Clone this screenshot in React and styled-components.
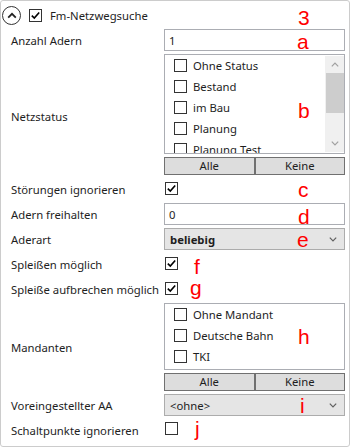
import React from 'react';
import styled, { createGlobalStyle } from 'styled-components';

const Global = createGlobalStyle`
  html, body { margin: 0; padding: 0; background: #ffffff; }
  body {
    font-family: "Noto Sans", "Open Sans", sans-serif;
    font-size: 11.3px;
    color: #1e1e1e;
  }
  * { box-sizing: border-box; }
`;

const Group = styled.section`
  position: relative;
  width: 350px;
  height: 447px;
  border: 1px solid #cccccc;
  border-radius: 3px;
`;

const Header = styled.header`
  display: flex;
  align-items: center;
  height: 28px;
  padding-left: 1px;
`;

const Expander = styled.span`
  width: 19px;
  height: 19px;
  border-radius: 50%;
  border: 1px solid #333333;
  display: flex;
  align-items: center;
  justify-content: center;
  margin-right: 8px;
  flex: none;
`;

const Box = styled.span`
  display: inline-flex;
  align-items: center;
  justify-content: center;
  width: 13px;
  height: 13px;
  border: 1px solid #333333;
  background: #ffffff;
  flex: none;
  margin-left: ${(p) => p.$ml || 0}px;
`;

const Title = styled.span`
  margin-left: 8px;
  white-space: nowrap;
`;

const Form = styled.div`
  display: flex;
  flex-direction: column;
  gap: 3px;
  padding: 0 4px 0 10px;
`;

const Field = styled.div`
  display: grid;
  grid-template-columns: 153px 181px;
  align-items: center;
  min-height: ${(p) => p.$h || 0}px;
`;

const Label = styled.span`
  white-space: nowrap;
  padding-top: ${(p) => p.$pt || 0}px;
`;

const Stack = styled.div`
  display: flex;
  flex-direction: column;
  gap: 3px;
`;

const TextInput = styled.div`
  height: 22px;
  border: 1px solid #abadb3;
  background: #ffffff;
  display: flex;
  align-items: center;
  padding: 0 4px;
`;

const List = styled.div`
  height: ${(p) => p.$h}px;
  border: 1px solid #abadb3;
  background: #ffffff;
  display: flex;
  overflow: hidden;
`;

const Items = styled.div`
  flex: 1;
  display: flex;
  flex-direction: column;
  overflow: hidden;
`;

const Item = styled.div`
  flex: none;
  height: 21px;
  display: flex;
  align-items: center;
  gap: 6px;
  padding-left: 9px;
  white-space: nowrap;
`;

const Scrollbar = styled.div`
  width: 19px;
  margin: 1px 0;
  background: #f0f0f0;
  display: flex;
  flex-direction: column;
  flex: none;
`;

const ScrollArrow = styled.div`
  height: 17px;
  display: flex;
  align-items: center;
  justify-content: center;
  flex: none;
`;

const Track = styled.div`
  flex: 1;
`;

const Thumb = styled.div`
  height: 40px;
  margin-left: 1px;
  background: #cdcdcd;
`;

const ButtonRow = styled.div`
  display: flex;
`;

const Button = styled.button`
  flex: 1;
  height: 18px;
  padding: 0;
  border: 1px solid #707070;
  background: #dddddd;
  font: inherit;
  color: #1e1e1e;
  line-height: 14px;
`;

const Combo = styled.div`
  height: 22px;
  border: 1px solid #acacac;
  background: #e5e5e5;
  display: flex;
  align-items: center;
  justify-content: space-between;
  padding: 0 7px 0 5px;
  font-weight: ${(p) => (p.$bold ? 700 : 400)};
`;

const Mark = styled.span`
  position: absolute;
  left: ${(p) => p.$x}px;
  top: ${(p) => p.$y}px;
  font-family: "Liberation Sans", Arial, sans-serif;
  font-size: 21px;
  line-height: 21px;
  color: #ff0000;
  pointer-events: none;
`;

const Check = () => (
  <svg width="11" height="11" viewBox="0 0 11 11">
    <path d="M1.8 5.6 L4.3 8.1 L9.2 2.4" fill="none" stroke="#000" strokeWidth="1.6" />
  </svg>
);

const CheckBox = ({ checked, ml }) => <Box $ml={ml}>{checked && <Check />}</Box>;

const Chevron = ({ up, color = '#606060', w = 8, h = 5 }) => (
  <svg width={w} height={h} viewBox="0 0 8 5">
    <path
      d={up ? 'M0.8 4.3 L4 1 L7.2 4.3' : 'M0.8 0.7 L4 4 L7.2 0.7'}
      fill="none"
      stroke={color}
      strokeWidth="1.2"
    />
  </svg>
);

const CheckList = ({ items, height, scroll }) => (
  <List $h={height}>
    <Items>
      {items.map((t) => (
        <Item key={t}>
          <CheckBox />
          <span>{t}</span>
        </Item>
      ))}
    </Items>
    {scroll && (
      <Scrollbar>
        <ScrollArrow>
          <Chevron up color="#a0a0a0" />
        </ScrollArrow>
        <Track>
          <Thumb />
        </Track>
        <ScrollArrow>
          <Chevron color="#a0a0a0" />
        </ScrollArrow>
      </Scrollbar>
    )}
  </List>
);

const Buttons = () => (
  <ButtonRow>
    <Button>Alle</Button>
    <Button>Keine</Button>
  </ButtonRow>
);

const marks = [
  ['3', 297, 6],
  ['a', 296, 30],
  ['b', 297, 99],
  ['c', 297, 178],
  ['d', 297, 205],
  ['e', 296, 228],
  ['f', 193, 255],
  ['g', 189, 276],
  ['h', 297, 325],
  ['i', 299, 394],
  ['j', 194, 417],
];

export default function App() {
  return (
    <>
      <Global />
      <Group>
        <Header>
          <Expander>
            <svg width="10" height="7" viewBox="0 0 10 7">
              <path d="M1.2 5.6 L5 1.8 L8.8 5.6" fill="none" stroke="#222" strokeWidth="1.8" />
            </svg>
          </Expander>
          <CheckBox checked />
          <Title>Fm-Netzwegsuche</Title>
        </Header>
        <Form>
          <Field>
            <Label>Anzahl Adern</Label>
            <TextInput>1</TextInput>
          </Field>
          <Field>
            <Label $pt={3}>Netzstatus</Label>
            <Stack>
              <CheckList
                height={100}
                scroll
                items={['Ohne Status', 'Bestand', 'im Bau', 'Planung', 'Planung Test']}
              />
              <Buttons />
            </Stack>
          </Field>
          <Field $h={22}>
            <Label>Störungen ignorieren</Label>
            <div><CheckBox checked ml={1} /></div>
          </Field>
          <Field>
            <Label>Adern freihalten</Label>
            <TextInput>0</TextInput>
          </Field>
          <Field>
            <Label>Aderart</Label>
            <Combo $bold>
              <span>beliebig</span>
              <Chevron />
            </Combo>
          </Field>
          <Field $h={22}>
            <Label>Spleißen möglich</Label>
            <div><CheckBox checked ml={1} /></div>
          </Field>
          <Field $h={22}>
            <Label>Spleiße aufbrechen möglich</Label>
            <div><CheckBox checked ml={1} /></div>
          </Field>
          <Field>
            <Label>Mandanten</Label>
            <Stack>
              <CheckList height={67} items={['Ohne Mandant', 'Deutsche Bahn', 'TKI']} />
              <Buttons />
            </Stack>
          </Field>
          <Field>
            <Label>Voreingestellter AA</Label>
            <Combo>
              <span>&lt;ohne&gt;</span>
              <Chevron />
            </Combo>
          </Field>
          <Field $h={22}>
            <Label>Schaltpunkte ignorieren</Label>
            <div><CheckBox ml={1} /></div>
          </Field>
        </Form>
        {marks.map(([t, x, y]) => (
          <Mark key={t} $x={x} $y={y}>{t}</Mark>
        ))}
      </Group>
    </>
  );
}
